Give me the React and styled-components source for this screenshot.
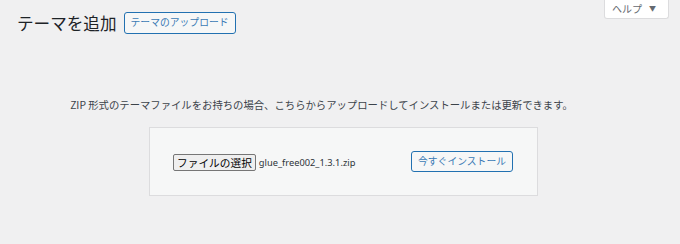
import styled, { createGlobalStyle } from 'styled-components'

const GlobalStyle = createGlobalStyle`
    html, body {
        margin: 0;
        padding: 0;
        background: #f0f0f1;
    }
    body {
        font-family: "Noto Sans CJK JP", "Noto Sans", sans-serif;
        color: #3c434a;
    }
`

const Wrap = styled.div`
    padding: 12px 54px 40px 17px;
`

const HelpTab = styled.button`
    float: right;
    margin: -12px -43px 0 0;
    height: 19px;
    width: 65px;
    box-sizing: border-box;
    padding: 0 12px 2px 7px;
    display: flex;
    align-items: center;
    background: #fff;
    border: 1px solid #dcdcde;
    border-top: none;
    border-radius: 0 0 3px 3px;
    font-family: "Noto Sans CJK JP", sans-serif;
    font-size: 10px;
    color: #646970;
    cursor: pointer;
`

const Caret = styled.span`
    font-size: 7px;
    margin-left: 7px;
    color: #646970;
`

const Header = styled.div`
    display: flex;
    align-items: center;
    height: 22px;
`

const Title = styled.h1`
    margin: 0;
    font-size: 16.6px;
    font-weight: 400;
    line-height: 22px;
    color: #1d2327;
    font-family: "Noto Sans CJK JP", sans-serif;
`

const OutlineButton = styled.button`
    box-sizing: border-box;
    height: ${(props) => props.height || '22px'};
    margin-left: ${(props) => props.marginLeft || '0'};
    padding: 0 6px;
    background: #f6f7f7;
    border: 1px solid #2271b1;
    border-radius: 3px;
    color: #3a7ab5;
    font-family: "Noto Sans CJK JP", sans-serif;
    font-size: 9.8px;
    line-height: 1;
    white-space: nowrap;
    cursor: pointer;
`

const UploadSection = styled.div`
    display: flex;
    flex-direction: column;
    align-items: center;
    margin-top: 64px;
`

const HelpText = styled.p`
    margin: 0;
    font-size: 10.35px;
    line-height: 14px;
    color: #3c434a;
    white-space: nowrap;
`

const UploadForm = styled.form`
    box-sizing: border-box;
    width: 389px;
    height: 69px;
    margin: 15px 0 0 44px;
    padding: 0 24px 0 23px;
    display: flex;
    align-items: center;
    justify-content: space-between;
    background: #f6f7f7;
    border: 1px solid #dcdcde;
`

const FilePicker = styled.div`
    display: flex;
    align-items: center;
    margin-top: 2px;
`

const FileButton = styled.span`
    box-sizing: border-box;
    height: 17px;
    padding: 0 3px;
    display: inline-flex;
    align-items: center;
    background: #efefef;
    border: 1px solid #767676;
    border-radius: 2px;
    font-size: 10.7px;
    color: #000;
    white-space: nowrap;
`

const FileName = styled.span`
    margin-left: 3px;
    font-family: "Noto Sans", "Open Sans", sans-serif;
    font-size: 9.3px;
    color: #2c3338;
`

export default function App() {
    return (
        <>
            <GlobalStyle />
            <Wrap>
                <HelpTab>
                    ヘルプ<Caret>▼</Caret>
                </HelpTab>
                <Header>
                    <Title>テーマを追加</Title>
                    <OutlineButton marginLeft="7px">テーマのアップロード</OutlineButton>
                </Header>
                <UploadSection>
                    <HelpText>
                        ZIP 形式のテーマファイルをお持ちの場合、こちらからアップロードしてインストールまたは更新できます。
                    </HelpText>
                    <UploadForm onSubmit={(e) => e.preventDefault()}>
                        <FilePicker>
                            <FileButton>ファイルの選択</FileButton>
                            <FileName>glue_free002_1.3.1.zip</FileName>
                        </FilePicker>
                        <OutlineButton height="21px">今すぐインストール</OutlineButton>
                    </UploadForm>
                </UploadSection>
            </Wrap>
        </>
    )
}
